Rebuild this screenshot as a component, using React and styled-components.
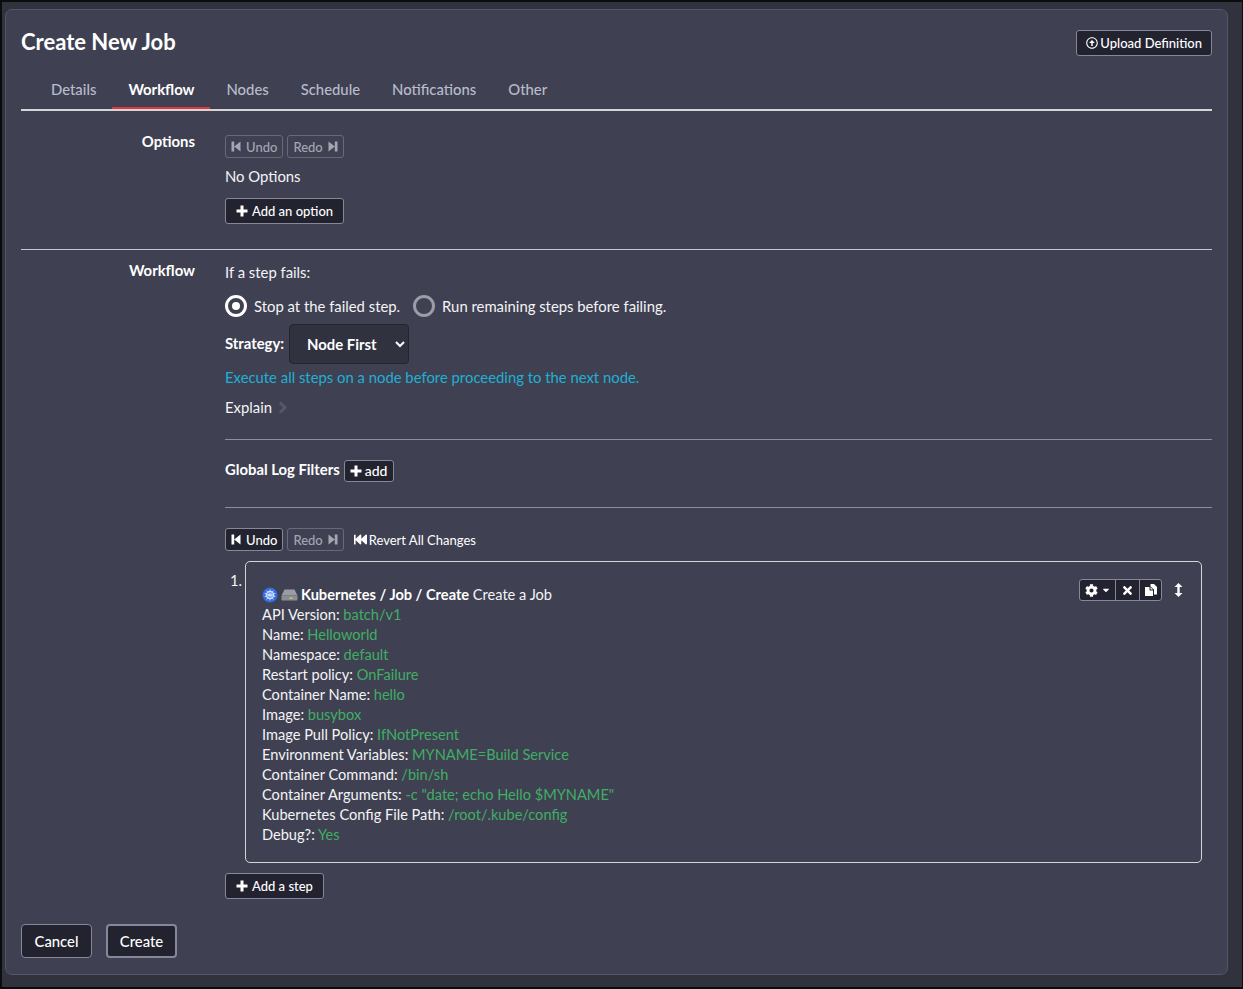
import React from 'react'
import styled, { createGlobalStyle } from 'styled-components'
import {
  FaFastBackward,
  FaCog,
  FaTimes,
  FaRegArrowAltCircleUp,
  FaCaretDown,
} from 'react-icons/fa'

const GlobalStyle = createGlobalStyle`
  html, body {
    margin: 0;
    padding: 0;
    background: #30323e;
  }
  body {
    font-family: "Lato", "Open Sans", sans-serif;
    font-size: 14.85px;
    color: #f4f4f6;
  }
`

const Page = styled.div`
  box-sizing: border-box;
  width: 1243px;
  height: 989px;
  padding: 7px 14px 12px 3px;
  border-top: 2px solid #0c0c0c;
  border-left: 2px solid #0c0c0c;
  border-right: 1px solid #0c0c0c;
  border-bottom: 2px solid #0c0c0c;
`

const Card = styled.div`
  box-sizing: border-box;
  height: 966px;
  width: 1223px;
  padding: 0 15px;
  background: #3f4152;
  border: 1px solid #54566a;
  border-radius: 7px;
`

const Header = styled.div`
  display: flex;
  justify-content: space-between;
  align-items: flex-start;
  height: 65px;
  padding-top: 19px;
  box-sizing: border-box;
`

const Title = styled.h1`
  margin: 0;
  font-size: 22px;
  line-height: 26px;
  font-weight: 700;
  color: #fff;
`

const Tabs = styled.div`
  display: flex;
  height: 34px;
  padding-left: 14px;
  border-bottom: 2px solid #d5d5d8;
`

const Tab = styled.div`
  box-sizing: border-box;
  height: 34px;
  padding: 3px 16px 0;
  line-height: 22px;
  font-weight: ${p => (p.$active ? 700 : 500)};
  color: ${p => (p.$active ? '#fff' : '#b8bccb')};
  border-bottom: 2px solid ${p => (p.$active ? '#e0383b' : 'transparent')};
`

const FormRow = styled.div`
  display: grid;
  grid-template-columns: 174px 1fr;
  column-gap: 30px;
`

const RowLabel = styled.div`
  margin-top: ${p => p.$top || 0}px;
  text-align: right;
  font-weight: 700;
  line-height: 20px;
  color: #fff;
`

const OptionsRow = styled(FormRow)`
  padding-top: 20px;
  padding-bottom: 25px;
  border-bottom: 1px solid #c8c8cc;
`

const OptionsBody = styled.div`
  padding-top: 4px;
`

const WorkflowRow = styled(FormRow)`
  padding-top: 12px;
`

const BtnGroupRow = styled.div`
  display: flex;
  align-items: center;
  gap: 4px;
`

const Btn = styled.button`
  display: inline-flex;
  align-items: center;
  justify-content: center;
  gap: ${p => p.$gap || 4}px;
  box-sizing: border-box;
  height: 26px;
  padding: 0 ${p => p.$px || 10}px;
  font-family: inherit;
  font-size: 13px;
  font-weight: 500;
  line-height: 16px;
  color: #fff;
  background: #22232f;
  border: ${p => p.$bw || 1}px solid #85889a;
  border-radius: 3px;
  white-space: nowrap;
  svg {
    flex: none;
  }
`

const UploadBtn = styled(Btn)`
  margin-top: 1px;
`

const UndoBtn = styled(Btn)`
  height: 23px;
  padding: 0 5px;
  gap: 5px;
  background: ${p => (p.disabled ? 'transparent' : '#22232f')};
  color: ${p => (p.disabled ? '#a4a6b2' : '#fff')};
  border-color: ${p => (p.disabled ? '#686a7c' : '#85889a')};
`

const NoOptions = styled.div`
  margin: 8px 0 12px;
  line-height: 20px;
`

const PlainText = styled.div`
  line-height: 20px;
`

const RadioRow = styled.div`
  display: flex;
  align-items: center;
  height: 24px;
  margin-top: 12px;
  gap: 13px;
`

const RadioLabel = styled.label`
  display: flex;
  align-items: center;
  gap: 7px;
`

const RadioMark = styled.span`
  box-sizing: border-box;
  display: inline-flex;
  align-items: center;
  justify-content: center;
  width: 22px;
  height: 22px;
  border-radius: 50%;
  border: 3px solid ${p => (p.$on ? '#fff' : '#9a9ca8')};
  &::after {
    content: '';
    display: ${p => (p.$on ? 'block' : 'none')};
    width: 8px;
    height: 8px;
    border-radius: 50%;
    background: #fff;
  }
`

const StrategyRow = styled.div`
  display: flex;
  align-items: center;
  gap: 5px;
  margin-top: 6px;
`

const StrongLabel = styled.span`
  font-weight: 700;
  color: #fff;
`

const StrategyLabel = styled(StrongLabel)`
  padding-bottom: 3px;
`

const StrategySelect = styled.select`
  box-sizing: border-box;
  width: 120px;
  height: 40px;
  padding: 0 8px 0 13px;
  font-family: inherit;
  font-size: 14.85px;
  font-weight: 700;
  color: #fff;
  background: #30323f;
  border: 1px solid #24252f;
  border-radius: 4px;
  color-scheme: dark;
`

const StrategyHelp = styled.div`
  margin-top: 3px;
  line-height: 20px;
  color: #1fb0d3;
`

const Explain = styled.div`
  display: flex;
  align-items: center;
  gap: 6px;
  margin-top: 10px;
  line-height: 20px;
`

const Rule = styled.hr`
  margin: ${p => p.$top}px 0 0;
  border: 0;
  border-top: 1px solid #8c8e9b;
`

const FilterRow = styled.div`
  display: flex;
  align-items: center;
  gap: 4px;
  height: 22px;
  margin-top: 18px;
`

const AddSmall = styled(Btn)`
  height: 22px;
  padding: 0 6px 0 5px;
  gap: 3px;
  margin-top: 3px;
  font-size: 14px;
`

const UndoRow = styled(BtnGroupRow)`
  margin-top: 20px;
`

const RevertLink = styled.span`
  display: inline-flex;
  align-items: center;
  gap: 2px;
  margin-left: 6px;
  font-size: 13px;
  color: #fff;
`

const StepRow = styled.div`
  display: flex;
  margin-top: 10px;
`

const StepNumber = styled.div`
  box-sizing: border-box;
  width: 20px;
  padding: 9px 0 0 5px;
  line-height: 20px;
`

const StepBox = styled.div`
  position: relative;
  box-sizing: border-box;
  width: 957px;
  height: 302px;
  padding: 23px 16px 0;
  font-size: 14.6px;
  border: 1px solid #d5d5d8;
  border-radius: 5px;
`

const StepHead = styled.div`
  display: flex;
  align-items: center;
  gap: 3px;
  line-height: 20px;
  svg {
    flex: none;
  }
`

const StepLine = styled.div`
  line-height: 20px;
  white-space: pre;
`

const Val = styled.span`
  color: #3fae64;
`

const StepTools = styled.div`
  position: absolute;
  top: 17px;
  right: 18px;
  display: flex;
  align-items: center;
  gap: 12px;
`

const ToolGroup = styled.div`
  display: flex;
  height: 22px;
  background: #22232f;
  border: 1px solid #85889a;
  border-radius: 3px;
  box-sizing: border-box;
`

const ToolBtn = styled.div`
  box-sizing: border-box;
  display: flex;
  align-items: center;
  justify-content: center;
  gap: 3px;
  width: ${p => p.$w}px;
  color: #fff;
  & + & {
    border-left: 1px solid #85889a;
  }
`

const AddStepWrap = styled.div`
  margin-top: 10px;
`

const Footer = styled.div`
  display: flex;
  gap: 14px;
  margin-top: 25px;
`

const FooterBtn = styled(Btn)`
  width: 71px;
  height: 34px;
  padding: 0;
  font-size: 14.85px;
  border-radius: 4px;
`

const PlusIcon = () => (
  <svg width="12" height="12" viewBox="0 0 12 12" aria-hidden="true">
    <path d="M4.5 0.5H7.5V4.5H11.5V7.5H7.5V11.5H4.5V7.5H0.5V4.5H4.5Z" fill="currentColor" />
  </svg>
)

const StepIcon = ({ flip }) => (
  <svg width="10" height="11" viewBox="0 0 10 11" aria-hidden="true" transform={flip ? 'scale(-1 1)' : undefined}>
    <path d="M0.5 0.5H3.2V10.5H0.5ZM3.2 5.5L9.5 0.5V10.5Z" fill="currentColor" />
  </svg>
)

const ChevronIcon = () => (
  <svg width="10" height="13" viewBox="0 0 10 13" aria-hidden="true">
    <path d="M2 1.5L7 6.5L2 11.5" fill="none" stroke="#565869" strokeWidth="3" />
  </svg>
)

const KubeIcon = () => (
  <svg width="16" height="16" viewBox="0 0 16 16" aria-hidden="true">
    <circle cx="8" cy="8" r="7.5" fill="#326ce5" />
    <circle cx="8" cy="8" r="3.6" fill="none" stroke="#cfe0ff" strokeWidth="1.4" />
    <path
      d="M8 2.5V13.5M2.7 6.4L13.3 9.6M2.7 9.6L13.3 6.4M4.6 3.5L11.4 12.5M11.4 3.5L4.6 12.5"
      stroke="#cfe0ff"
      strokeWidth="0.9"
    />
  </svg>
)

const DriveIcon = () => (
  <svg width="17" height="12" viewBox="0 0 17 12" aria-hidden="true">
    <path d="M3.5 0.5H13.5L16.5 6.5H0.5Z" fill="#9a9ca4" />
    <rect x="0.5" y="6.5" width="16" height="5" rx="0.8" fill="#8b8d95" />
    <rect x="8.5" y="8.5" width="3" height="1.2" fill="#e8d53a" />
  </svg>
)

const DuplicateIcon = () => (
  <svg width="14" height="14" viewBox="0 0 14 14" aria-hidden="true">
    <path d="M6.5 1H10L13 4V11.5H10V6.5L6.5 3.5Z" fill="#fff" />
    <path d="M1 4H5.5V7.5H9V13H1Z" fill="#fff" />
    <path d="M6.5 4.2L9 6.6H6.5Z" fill="#fff" />
  </svg>
)

const ResizeVIcon = () => (
  <svg width="9" height="14" viewBox="0 0 9 14" aria-hidden="true">
    <path d="M4.5 0L8.5 4H5.7V10H8.5L4.5 14L0.5 10H3.3V4H0.5Z" fill="#fff" />
  </svg>
)

const stepLines = [
  ['API Version: ', 'batch/v1'],
  ['Name: ', 'Helloworld'],
  ['Namespace: ', 'default'],
  ['Restart policy: ', 'OnFailure'],
  ['Container Name: ', 'hello'],
  ['Image: ', 'busybox'],
  ['Image Pull Policy: ', 'IfNotPresent'],
  ['Environment Variables: ', 'MYNAME=Build Service'],
  ['Container Command: ', '/bin/sh'],
  ['Container Arguments: ', '-c "date; echo Hello $MYNAME"'],
  ['Kubernetes Config File Path: ', '/root/.kube/config'],
  ['Debug?: ', 'Yes'],
]

const tabs = ['Details', 'Workflow', 'Nodes', 'Schedule', 'Notifications', 'Other']

export default function App() {
  return (
    <Page>
      <GlobalStyle />
      <Card>
        <Header>
          <Title>Create New Job</Title>
          <UploadBtn $px={9} $gap={2}>
            <FaRegArrowAltCircleUp size={12} /> Upload Definition
          </UploadBtn>
        </Header>

        <Tabs>
          {tabs.map(t => (
            <Tab key={t} $active={t === 'Workflow'}>{t}</Tab>
          ))}
        </Tabs>

        <OptionsRow>
          <RowLabel>Options</RowLabel>
          <OptionsBody>
            <BtnGroupRow>
              <UndoBtn disabled><StepIcon /> Undo</UndoBtn>
              <UndoBtn disabled>Redo <StepIcon flip /></UndoBtn>
            </BtnGroupRow>
            <NoOptions>No Options</NoOptions>
            <Btn><PlusIcon /> Add an option</Btn>
          </OptionsBody>
        </OptionsRow>

        <WorkflowRow>
          <RowLabel $top={-2}>Workflow</RowLabel>
          <div>
            <PlainText>If a step fails:</PlainText>
            <RadioRow>
              <RadioLabel><RadioMark $on /> Stop at the failed step.</RadioLabel>
              <RadioLabel><RadioMark /> Run remaining steps before failing.</RadioLabel>
            </RadioRow>
            <StrategyRow>
              <StrategyLabel>Strategy:</StrategyLabel>
              <StrategySelect defaultValue="node">
                <option value="node">Node First</option>
                <option value="step">Sequential</option>
              </StrategySelect>
            </StrategyRow>
            <StrategyHelp>Execute all steps on a node before proceeding to the next node.</StrategyHelp>
            <Explain>Explain <ChevronIcon /></Explain>
            <Rule $top={22} />
            <FilterRow>
              <StrongLabel>Global Log Filters</StrongLabel>
              <AddSmall><PlusIcon /> add</AddSmall>
            </FilterRow>
            <Rule $top={27} />
            <UndoRow>
              <UndoBtn><StepIcon /> Undo</UndoBtn>
              <UndoBtn disabled>Redo <StepIcon flip /></UndoBtn>
              <RevertLink><FaFastBackward size={13} /> Revert All Changes</RevertLink>
            </UndoRow>
            <StepRow>
              <StepNumber>1.</StepNumber>
              <StepBox>
                <StepTools>
                  <ToolGroup>
                    <ToolBtn $w={35}><FaCog size={13} /><FaCaretDown size={10} /></ToolBtn>
                    <ToolBtn $w={24}><FaTimes size={13} /></ToolBtn>
                    <ToolBtn $w={22}><DuplicateIcon /></ToolBtn>
                  </ToolGroup>
                  <ResizeVIcon />
                </StepTools>
                <StepHead>
                  <KubeIcon />
                  <DriveIcon />
                  <span><StrongLabel>Kubernetes / Job / Create</StrongLabel> Create a Job</span>
                </StepHead>
                {stepLines.map(([k, v]) => (
                  <StepLine key={k}>{k}<Val>{v}</Val></StepLine>
                ))}
              </StepBox>
            </StepRow>
            <AddStepWrap>
              <Btn><PlusIcon /> Add a step</Btn>
            </AddStepWrap>
          </div>
        </WorkflowRow>

        <Footer>
          <FooterBtn>Cancel</FooterBtn>
          <FooterBtn $bw={2}>Create</FooterBtn>
        </Footer>
      </Card>
    </Page>
  )
}
